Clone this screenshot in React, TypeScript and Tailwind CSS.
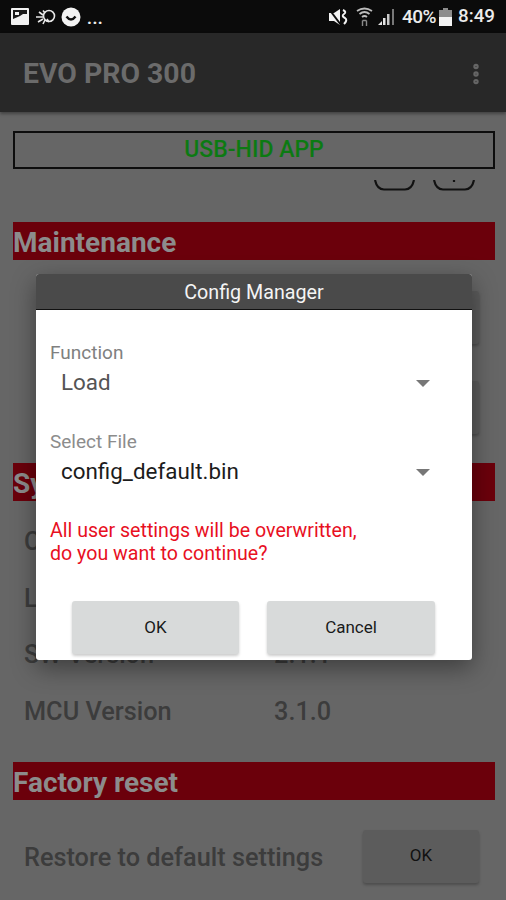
import { MoreVertical } from "lucide-react";

function StatusLeft() {
  return (
    <div className="flex items-center">
      <svg width="18" height="17" viewBox="0 0 18 17" className="ml-[11px]">
        <rect x="0" y="0" width="18" height="17" rx="1" fill="#f2f2f2" />
        <rect x="2" y="2" width="14" height="9" fill="#1a1a1a" />
        <rect x="4" y="4" width="4" height="3" fill="#f2f2f2" />
        <path d="M2 13 L2 11 L9 8 L12 6 L16 6 L16 15 L2 15 Z" fill="#f2f2f2" />
      </svg>
      <svg width="22" height="18" viewBox="0 0 22 18" className="ml-[6px]" fill="none" stroke="#e8e8e8" strokeWidth="1.6">
        <circle cx="14" cy="8" r="5.5" />
        <path d="M8 2.5 L10 5 M4 4 L8 7 M1 9 L8 9 M3 14 L8 11 M8 16 L10 12 M14 14 L12 11" />
      </svg>
      <svg width="20" height="20" viewBox="0 0 20 20" className="ml-[4px]">
        <circle cx="10" cy="10" r="9.5" fill="#f4f4f4" />
        <path d="M5.5 9.5 Q10 15.5 14.5 9.5" fill="none" stroke="#111" strokeWidth="2.4" />
      </svg>
      <span className="ml-[6px] mt-[4px] text-[17px] leading-none font-bold text-[#efefef] tracking-[0.5px]">...</span>
    </div>
  );
}

function StatusRight() {
  return (
    <div className="flex items-center text-[#ececec]">
      <svg width="20" height="18" viewBox="0 0 20 18">
        <path d="M1 5 H6 L12 1 V17 L6 13 H1 Z" fill="#f2f2f2" />
        <path d="M1 1 L13 17" stroke="#0b0b0b" strokeWidth="2" />
        <path d="M15 2 Q19 4 16 6 Q13 8 17 10 Q20 12 16 16" fill="none" stroke="#f2f2f2" strokeWidth="2" />
      </svg>
      <svg width="17" height="20" viewBox="0 0 17 20" className="ml-[8px]" fill="none" stroke="#bdbdbd" strokeWidth="1.8">
        <path d="M1 4 Q8.5 -1 16 4" />
        <path d="M3.5 7 Q8.5 3 13.5 7" />
        <path d="M6 10 Q8.5 8 11 10" />
        <path d="M6.5 13.5 H10.5 M6.5 13.5 V19 M10.5 13.5 V19" stroke="#8a8a8a" strokeWidth="1.4" />
      </svg>
      <svg width="17" height="18" viewBox="0 0 17 18" className="ml-[5px]">
        <path d="M0 17 L4 13 V17 Z" fill="#e4e4e4" />
        <rect x="5" y="10" width="2.5" height="7" fill="#e4e4e4" />
        <rect x="9" y="6" width="2.5" height="11" fill="#c8c8c8" />
        <rect x="14" y="1" width="2" height="16" fill="#777" />
      </svg>
      <span className="ml-[7px] text-[19px] leading-none font-medium w-[34px] tracking-[-0.5px]">40%</span>
      <svg width="13" height="18" viewBox="0 0 13 18" className="ml-[3px]">
        <rect x="4" y="0" width="5" height="2" fill="#8c8c8c" />
        <rect x="0" y="2" width="13" height="7" fill="#8c8c8c" />
        <rect x="0" y="9" width="13" height="9" fill="#f2f2f2" />
      </svg>
      <span className="ml-[6px] mr-[11px] text-[18.8px] leading-none font-medium">8:49</span>
    </div>
  );
}

function Section({ title, className }: { title: string; className: string }) {
  return (
    <div className={`h-[38px] bg-[#6b000b] text-[#8c8c8c] text-[28px] leading-[41px] font-bold ${className}`}>
      {title}
    </div>
  );
}

function Row({ label, value, className }: { label: string; value?: string; className: string }) {
  return (
    <div className={`flex items-center h-[30px] pl-[11px] text-[25.3px] font-medium text-[#3c3c3c] ${className}`}>
      <span className="w-[250px] whitespace-nowrap">{label}</span>
      {value && <span>{value}</span>}
    </div>
  );
}

function DimButton() {
  return (
    <div className="w-[116px] h-[53px] rounded-[3px] bg-[#5c5c5c] shadow-[0_2px_3px_rgba(0,0,0,0.25)] flex items-center justify-center pb-[2px] text-[17px] text-[#111]">
      OK
    </div>
  );
}

function Select({ value, color }: { value: string; color: string }) {
  return (
    <div className={`flex items-center justify-between h-[30px] pl-[11px] pr-[15px] text-[22.4px] ${color}`}>
      <span>{value}</span>
      <div className="w-0 h-0 border-x-[7px] border-x-transparent border-t-[7px] border-t-[#777]" />
    </div>
  );
}

export default function App() {
  return (
    <div className="relative w-[506px] h-[900px] overflow-hidden bg-[#666] font-['Roboto',sans-serif]">
      <div className="h-[33px] bg-[#0b0b0b] flex items-center justify-between">
        <StatusLeft />
        <StatusRight />
      </div>
      <div className="h-[79px] bg-[#282828] shadow-[0_2px_3px_rgba(0,0,0,0.35)] flex items-center justify-between pl-[23px] pr-[17px]">
        <span className="text-[28.4px] font-bold text-[#6b6b6b] pt-[4px]">EVO PRO 300</span>
        <MoreVertical size={26} strokeWidth={3} className="text-[#666] mt-[2px]" />
      </div>

      <div className="pl-[13px] pr-[11px] pt-[19px] flex flex-col">
        <div className="h-[38px] border-[2px] border-[#0d0d0d] flex items-center justify-center text-[23px] font-medium text-[#0c7a12]">
          USB-HID APP
        </div>
        <div className="h-[53px] flex justify-end pt-[11px] pr-[20px] gap-[18px]">
          <svg width="41" height="11" viewBox="0 0 41 11" fill="none" stroke="#111" strokeWidth="2.2">
            <path d="M1 0 Q3 9.5 10 9.5 H31 Q38 9.5 40 0" />
          </svg>
          <svg width="42" height="11" viewBox="0 0 42 11" fill="none" stroke="#111" strokeWidth="2.2">
            <path d="M1 0 Q3 9.5 10 9.5 H32 Q39 9.5 41 0" />
            <path d="M21 0 V2" />
          </svg>
        </div>
        <Section title="Maintenance" className="" />
        <div className="flex justify-end pr-[16px] pt-[31px]">
          <DimButton />
        </div>
        <div className="flex justify-end pr-[16px] pt-[37px]">
          <DimButton />
        </div>
        <Section title="System" className="mt-[29px]" />
        <Row label="Chip" className="mt-[26px]" />
        <Row label="Loader" className="mt-[27px]" />
        <Row label="SW Version" value="2.1.1" className="mt-[26px]" />
        <Row label="MCU Version" value="3.1.0" className="mt-[27px]" />
        <Section title="Factory reset" className="mt-[35px]" />
        <div className="flex items-center justify-between mt-[30px] pr-[16px]">
          <Row label="Restore to default settings" className="mt-[2px]" />
          <DimButton />
        </div>
      </div>

      {/* Config Manager dialog */}
      <div className="absolute left-[36px] top-[274px] w-[436px] h-[386px] rounded-[3px] overflow-hidden bg-white shadow-[0_8px_24px_rgba(0,0,0,0.4)]">
        <div className="h-[36px] bg-[#4a4a4a] border-b-[1px] border-[#111] flex items-center justify-center pt-[3px] text-[19.7px] text-[#f4f4f4]">
          Config Manager
        </div>
        <div className="px-[14px] pt-[32px]">
          <div className="h-[22px] flex items-center text-[19px] text-[#808080]">Function</div>
          <div className="mt-[4px] pr-[13px]">
            <Select value="Load" color="text-[#555]" />
          </div>
          <div className="mt-[33px] h-[22px] flex items-center text-[19px] text-[#8c8c8c]">Select File</div>
          <div className="mt-[4px] pr-[13px]">
            <Select value="config_default.bin" color="text-[#1c1c1c]" />
          </div>
          <div className="mt-[32px] text-[19.6px] leading-[23px] text-[#e8101f]">
            All user settings will be overwritten,
            <br />
            do you want to continue?
          </div>
        </div>
        <div className="flex gap-[28px] pl-[36px] pt-[36px]">
          <div className="w-[167px] h-[53px] rounded-[3px] bg-[#d8dada] shadow-[0_2px_3px_rgba(0,0,0,0.2)] flex items-center justify-center text-[17px] text-[#1a1a1a]">OK</div>
          <div className="w-[168px] h-[53px] rounded-[3px] bg-[#d8dada] shadow-[0_2px_3px_rgba(0,0,0,0.2)] flex items-center justify-center text-[17px] text-[#1a1a1a]">Cancel</div>
        </div>
      </div>
    </div>
  );
}
